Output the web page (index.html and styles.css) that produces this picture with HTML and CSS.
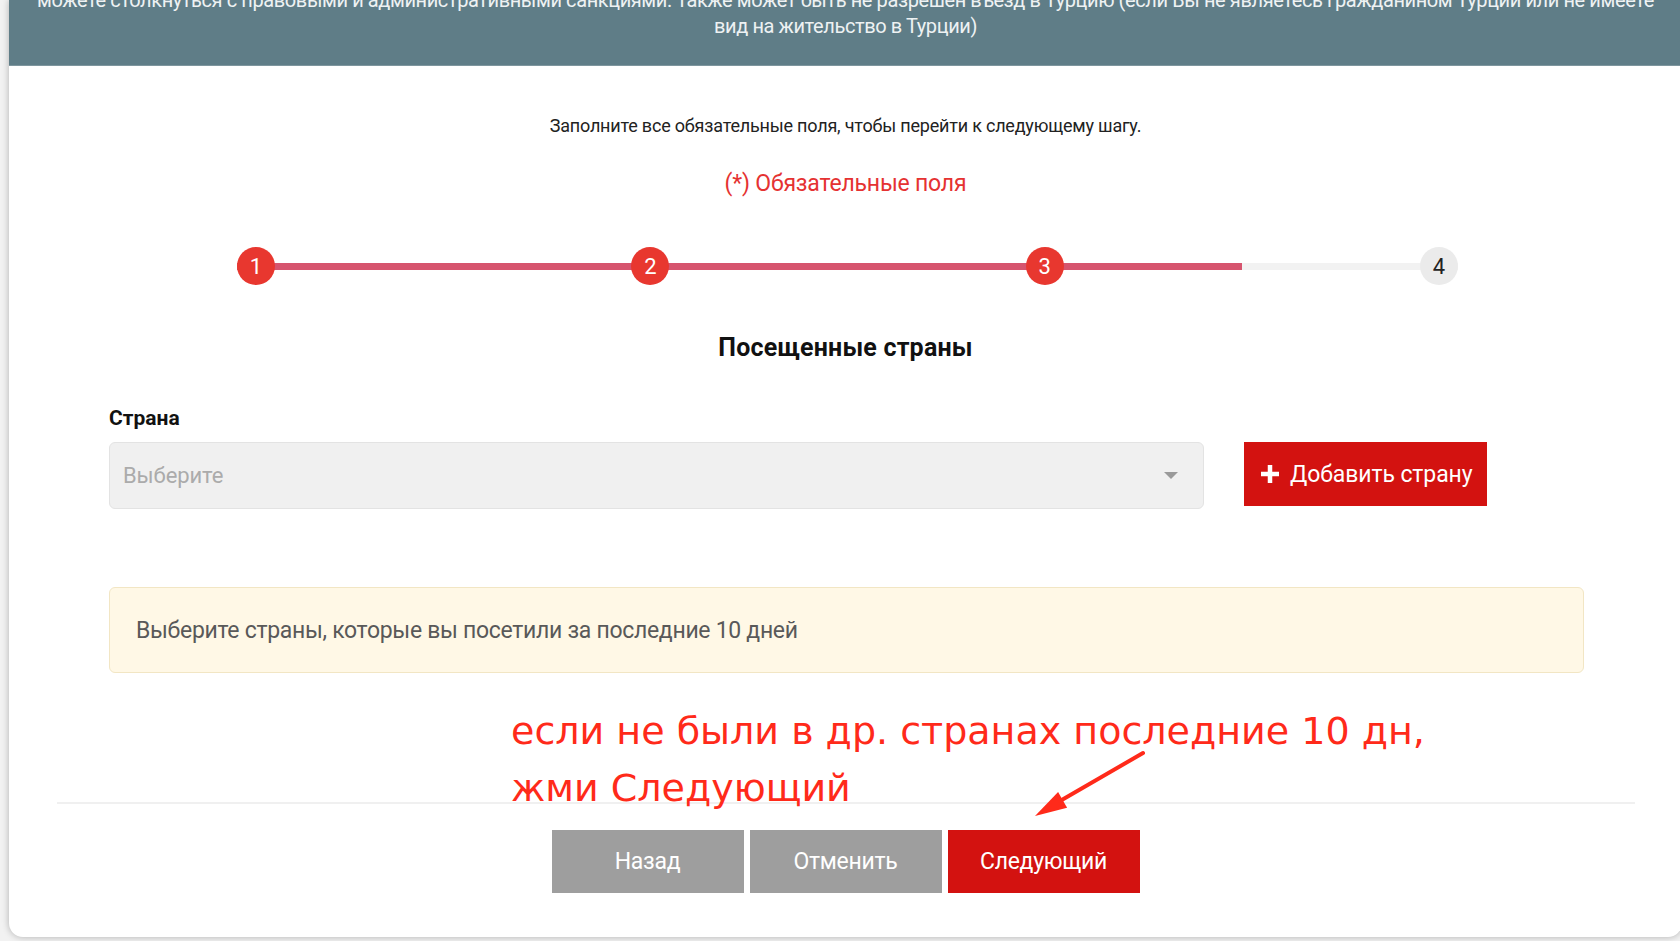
FILE: index.html
```html
<!DOCTYPE html>
<html lang="ru">
<head>
<meta charset="utf-8">
<title>Посещенные страны</title>
<link rel="stylesheet" href="styles.css">
</head>
<body>
<div class="card">
  <div class="banner">
    <span class="banner-line">можете столкнуться с правовыми и административными санкциями. Также может быть не разрешен въезд в Турцию (если Вы не являетесь гражданином Турции или не имеете</span>
    <span class="banner-line">вид на жительство в Турции)</span>
  </div>

  <p class="hint">Заполните все обязательные поля, чтобы перейти к следующему шагу.</p>
  <p class="required">(*) Обязательные поля</p>

  <div class="stepper">
    <span class="step done">1</span>
    <span class="step done">2</span>
    <span class="step done">3</span>
    <span class="step">4</span>
  </div>

  <h2 class="title">Посещенные страны</h2>

  <div class="form">
    <label class="label">Страна</label>
    <div class="form-row">
      <div class="select">
        <span class="placeholder">Выберите</span>
        <span class="caret"></span>
      </div>
      <button class="add-btn">
        <svg class="plus" width="20" height="20" viewBox="0 0 20 20"><path d="M10 1v18M1 10h18" stroke="#fff" stroke-width="4.5" fill="none"/></svg>
        <span>Добавить страну</span>
      </button>
    </div>
    <div class="info">Выберите страны, которые вы посетили за последние 10 дней</div>
  </div>

  <div class="footer">
    <button class="btn gray">Назад</button>
    <button class="btn gray">Отменить</button>
    <button class="btn red">Следующий</button>
  </div>

  <div class="note">если не были в др. странах последние 10 дн,<br>жми Следующий</div>
  <svg class="arrow" width="125" height="80" viewBox="0 0 125 80">
    <line x1="123" y1="8" x2="40" y2="56" stroke="#ff2a1a" stroke-width="4" stroke-linecap="round"/>
    <polygon points="15,71 47.1,62.7 38.1,47.1" fill="#ff2a1a"/>
  </svg>
</div>
</body>
</html>
```

FILE: styles.css
```css
html, body {
  margin: 0;
  padding: 0;
}
body {
  background: #f2f2f2;
  overflow: hidden;
  height: 941px;
  font-family: Roboto, "Noto Sans", sans-serif;
}
.card {
  position: relative;
  margin-left: 9px;
  width: 1673px;
  height: 937px;
  background: #fff;
  border-radius: 0 0 14px 14px;
  box-shadow: 0 0 7px rgba(0, 0, 0, 0.28);
  overflow: hidden;
  display: flex;
  flex-direction: column;
  align-items: center;
}
.banner {
  align-self: stretch;
  margin-top: -13px;
  padding: 0 0 26px;
  background: #5f7d87;
  border-bottom: 1px solid #7e969e;
  color: #eef2f3;
  text-align: center;
  font-size: 20px;
  line-height: 26px;
  letter-spacing: -0.4px;
}
.banner-line {
  display: block;
  white-space: nowrap;
}
.hint {
  margin: 48px 0 0;
  font-size: 18px;
  line-height: 24px;
  color: #222;
  letter-spacing: -0.2px;
}
.required {
  margin: 32px 0 0;
  font-size: 23px;
  line-height: 28px;
  color: #e53232;
  letter-spacing: -0.2px;
}
.stepper {
  margin: 49px 0 0 4px;
  width: 1221px;
  display: flex;
  justify-content: space-between;
  background:
    linear-gradient(#d6546e, #d6546e) left center / 1005px 7px no-repeat,
    linear-gradient(#f2f2f2, #f2f2f2) center / 100% 7px no-repeat;
}
.step {
  width: 38px;
  height: 38px;
  border-radius: 50%;
  background: #ebebeb;
  color: #222;
  display: flex;
  align-items: center;
  justify-content: center;
  font-size: 22px;
}
.step.done {
  background: #e8372f;
  color: #fff;
}
.title {
  margin: 48px 0 0;
  font-size: 25px;
  line-height: 30px;
  font-weight: 700;
  color: #111;
  letter-spacing: 0.2px;
}
.form {
  align-self: stretch;
  margin: 43px 0 0 100px;
  width: 1475px;
  display: flex;
  flex-direction: column;
}
.label {
  font-size: 21px;
  line-height: 24px;
  font-weight: 700;
  color: #111;
}
.form-row {
  margin-top: 12px;
  display: flex;
  align-items: flex-start;
  gap: 40px;
}
.select {
  width: 1095px;
  height: 67px;
  box-sizing: border-box;
  background: #f0f0f0;
  border: 1px solid #e3e3e3;
  border-radius: 6px;
  display: flex;
  align-items: center;
  justify-content: space-between;
  padding: 0 25px 0 13px;
}
.placeholder {
  font-size: 22px;
  color: #ababab;
  letter-spacing: -0.1px;
}
.caret {
  width: 0;
  height: 0;
  border-left: 7px solid transparent;
  border-right: 7px solid transparent;
  border-top: 7px solid #9a9a9a;
}
.add-btn {
  width: 243px;
  height: 64px;
  border: none;
  background: #d31210;
  color: #fff;
  font-family: inherit;
  font-size: 23px;
  letter-spacing: -0.1px;
  display: flex;
  align-items: center;
  gap: 10px;
  padding: 0 0 0 16px;
}
.info {
  margin-top: 78px;
  height: 86px;
  box-sizing: border-box;
  background: #fff8e6;
  border: 1px solid #f2e6c4;
  border-radius: 6px;
  display: flex;
  align-items: center;
  padding-left: 26px;
  font-size: 23px;
  color: #595959;
  letter-spacing: -0.3px;
}
.footer {
  margin-top: 129px;
  width: 1578px;
  border-top: 2px solid #f0f0f0;
  padding-top: 26px;
  display: flex;
  justify-content: center;
  gap: 6px;
}
.btn {
  width: 192px;
  height: 63px;
  border: none;
  color: #fff;
  font-family: inherit;
  font-size: 23px;
  letter-spacing: -0.3px;
}
.btn.gray {
  background: #9e9e9e;
}
.btn.red {
  background: #d31210;
}
.note {
  position: absolute;
  left: 502px;
  top: 703px;
  font-family: "DejaVu Sans", sans-serif;
  font-size: 38px;
  line-height: 57px;
  color: #ff2a1a;
  white-space: nowrap;
}
.arrow {
  position: absolute;
  left: 1011px;
  top: 745px;
}
```
